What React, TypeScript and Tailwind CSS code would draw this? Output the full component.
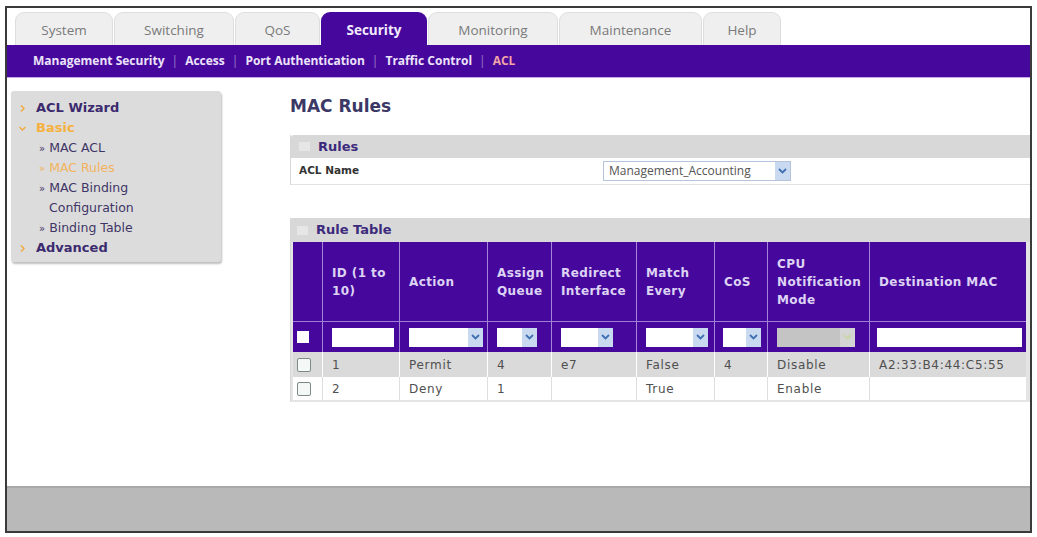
import React from 'react';

const tabs = ['System', 'Switching', 'QoS', 'Security', 'Monitoring', 'Maintenance', 'Help'];
const tabWidths = ['w-[98px]', 'w-[120px]', 'w-[85px]', 'w-[106px]', 'w-[130px]', 'w-[143px]', 'w-[78px]'];

const subLinks = ['Management Security', 'Access', 'Port Authentication', 'Traffic Control'];

// column widths for the rule table
const cols = [
  { w: 'w-[29px]', label: '' },
  { w: 'w-[77px]', label: 'ID (1 to 10)' },
  { w: 'w-[88px]', label: 'Action' },
  { w: 'w-[64px]', label: 'Assign Queue' },
  { w: 'w-[85px]', label: 'Redirect Interface' },
  { w: 'w-[78px]', label: 'Match Every' },
  { w: 'w-[53px]', label: 'CoS' },
  { w: 'w-[102px]', label: 'CPU Notification Mode' },
  { w: 'w-[157px]', label: 'Destination MAC' },
];

const rows = [
  ['1', 'Permit', '4', 'e7', 'False', '4', 'Disable', 'A2:33:B4:44:C5:55'],
  ['2', 'Deny', '1', '', 'True', '', 'Enable', ''],
];

const navFont = { fontFamily: '"Open Sans", "Liberation Sans", sans-serif' };

const Chevron: React.FC<{ dim?: boolean }> = ({ dim }) => (
  <svg width="9" height="6" viewBox="0 0 9 6">
    <path d="M1 1 L4.5 4.5 L8 1" fill="none" stroke={dim ? '#c9d6a8' : '#3f6fb5'} strokeWidth="1.8" />
  </svg>
);

const Select: React.FC<{ w: string; disabled?: boolean }> = ({ w, disabled }) => (
  <div className={`${w} h-[19px] flex justify-end ${disabled ? 'bg-[#c4c4c4]' : 'bg-white'}`}>
    <div className={`w-[15px] h-full flex items-center justify-center ${disabled ? 'bg-[#d4d4d4]' : 'bg-[#c9d9ef]'}`}>
      <Chevron dim={disabled} />
    </div>
  </div>
);

// orange tree arrow of the side menu
const Arrow: React.FC<{ open?: boolean }> = ({ open }) => (
  <span className="w-[17px] flex items-center">
    <svg width="7" height="7" viewBox="0 0 7 7">
      <path
        d={open ? 'M0.5 2 L3.5 5 L6.5 2' : 'M2 0.5 L5 3.5 L2 6.5'}
        fill="none"
        stroke="#f3a93c"
        strokeWidth="1.4"
      />
    </svg>
  </span>
);

const App: React.FC = () => {
  return (
    <div className="w-[1037px] h-[537px] bg-white pt-[6px] px-[5px]" style={{ fontFamily: '"DejaVu Sans", Verdana, sans-serif' }}>
      <div className="h-[527px] border-2 border-[#3a3a3a] flex flex-col">

        {/* Top tabs */}
        <div className="h-[37px] flex items-end pl-[8px] bg-white" style={navFont}>
          {tabs.map((t, i) => (
            <div
              key={t}
              className={`${tabWidths[i]} h-[33px] mr-[1px] rounded-t-[9px] flex items-center justify-center pt-[3px] text-[13.5px] ${
                t === 'Security'
                  ? 'bg-[#46089c] text-[#f2eaff] font-bold'
                  : 'bg-[#efefef] text-[#7a7a7a] border border-b-0 border-[#dedede]'
              }`}
            >
              {t}
            </div>
          ))}
        </div>

        {/* Sub navigation */}
        <div className="h-[33px] bg-[#46089c] border-b border-[#c9a7ea] flex items-center pl-[26px] text-[12px] font-bold text-[#ece3fa]" style={navFont}>
          {subLinks.map((s) => (
            <React.Fragment key={s}>
              <span>{s}</span>
              <span className="mx-[7px] text-[#9a7cc8] font-normal">|</span>
            </React.Fragment>
          ))}
          <span className="text-[#f2a3a8]">ACL</span>
        </div>

        {/* Body */}
        <div className="flex-1 flex bg-white">
          {/* Sidebar */}
          <div className="w-[285px] pl-[4px] pt-[13px]">
            <div className="w-[210px] h-[171px] bg-[#dcdcdc] rounded-[3px] shadow-[1px_2px_2px_rgba(0,0,0,0.25)] pt-[7px] pl-[8px] text-[#3b2a6e]">
              <div className="h-[20px] flex items-center text-[13px] font-bold"><Arrow />ACL Wizard</div>
              <div className="h-[20px] flex items-center text-[13px] font-bold text-[#f6b13c]"><Arrow open />Basic</div>
              <div className="h-[20px] flex items-center pl-[20px] text-[12.5px] text-[#3e3566]"><span className="mr-[4px] text-[10px]">»</span>MAC ACL</div>
              <div className="h-[20px] flex items-center pl-[20px] text-[12.5px] text-[#f3b35c]"><span className="mr-[4px] text-[10px]">»</span>MAC Rules</div>
              <div className="h-[20px] flex items-center pl-[20px] text-[12.5px] text-[#3e3566]"><span className="mr-[4px] text-[10px]">»</span>MAC Binding</div>
              <div className="h-[20px] flex items-center pl-[30px] text-[12.5px] text-[#3e3566]">Configuration</div>
              <div className="h-[20px] flex items-center pl-[20px] text-[12.5px] text-[#3e3566]"><span className="mr-[4px] text-[10px]">»</span>Binding Table</div>
              <div className="h-[20px] flex items-center text-[13px] font-bold"><Arrow />Advanced</div>
            </div>
          </div>

          {/* Main content */}
          <div className="flex-1 pt-[16px]">
            <div className="h-[41px] text-[17px] font-bold text-[#3b3866]">MAC Rules</div>

            {/* Rules box */}
            <div className="border-l border-[#d6d6d6]">
              <div className="h-[23px] bg-[#d8d8d8] flex items-center pl-[8px] rounded-tl-[3px]">
                <span className="w-[11px] h-[9px] bg-[#e6e6e6] mr-[8px]" />
                <span className="text-[13px] font-bold text-[#3c2a7c]">Rules</span>
              </div>
              <div className="h-[27px] flex items-center pl-[8px] border-b border-[#e2e2e2]">
                <span className="w-[304px] text-[10.5px] font-bold text-[#333]">ACL Name</span>
                <div className="w-[188px] h-[20px] border border-[#b5c3dc] bg-white flex items-center justify-between pl-[5px]">
                  <span className="text-[12px] text-[#555]" style={navFont}>Management_Accounting</span>
                  <div className="w-[15px] h-full bg-[#c9d9ef] flex items-center justify-center"><Chevron /></div>
                </div>
              </div>
            </div>

            {/* Rule table box */}
            <div className="mt-[33px] border-l border-[#d6d6d6] border-b border-b-[#e6e6e6] bg-[#e4e4e4] pb-[1px] pl-[2px] pr-[4px]">
              <div className="h-[24px] bg-[#d8d8d8] flex items-center pl-[6px] -ml-[2px] -mr-[4px] rounded-tl-[3px]">
                <span className="w-[11px] h-[9px] bg-[#e6e6e6] mr-[8px]" />
                <span className="text-[13px] font-bold text-[#3c2a7c]">Rule Table</span>
              </div>

              {/* header row */}
              <div className="flex bg-[#46089c] h-[80px] border-b border-[#9f7ed6]">
                {cols.map((c, i) => (
                  <div
                    key={i}
                    className={`${c.w} ${i > 0 ? 'border-l border-[#a585d8]' : ''} flex items-center pl-[9px] pr-[3px] text-[12px] tracking-[0.4px] font-bold leading-[18px] text-[#ddd3f4]`}
                  >
                    {c.label}
                  </div>
                ))}
              </div>

              {/* filter row */}
              <div className="flex bg-[#46089c] h-[30px]">
                <div className="w-[29px] flex items-center pl-[4px]"><div className="w-[12px] h-[12px] bg-white" /></div>
                <div className="w-[77px] border-l border-[#a585d8] flex items-center pl-[9px]"><div className="w-[62px] h-[19px] bg-white" /></div>
                <div className="w-[88px] border-l border-[#a585d8] flex items-center pl-[9px]"><Select w="w-[74px]" /></div>
                <div className="w-[64px] border-l border-[#a585d8] flex items-center pl-[9px]"><Select w="w-[40px]" /></div>
                <div className="w-[85px] border-l border-[#a585d8] flex items-center pl-[9px]"><Select w="w-[52px]" /></div>
                <div className="w-[78px] border-l border-[#a585d8] flex items-center pl-[9px]"><Select w="w-[62px]" /></div>
                <div className="w-[53px] border-l border-[#a585d8] flex items-center pl-[8px]"><Select w="w-[38px]" /></div>
                <div className="w-[102px] border-l border-[#a585d8] flex items-center pl-[9px]"><Select w="w-[78px]" disabled /></div>
                <div className="w-[157px] border-l border-[#a585d8] flex items-center pl-[7px]"><div className="w-[145px] h-[19px] bg-white" /></div>
              </div>

              {/* data rows */}
              {rows.map((r, ri) => (
                <div key={ri} className={`flex ${ri === 0 ? 'h-[25px] bg-[#dadada]' : 'h-[23px] bg-white'}`}>
                  <div className="w-[29px] flex items-center pl-[4px]">
                    <div className="w-[14px] h-[14px] border border-[#7d8a8a] rounded-[2px] bg-[#f4f8f6]" />
                  </div>
                  {r.map((v, ci) => (
                    <div
                      key={ci}
                      className={`${cols[ci + 1].w} border-l ${ri === 0 ? 'border-white' : 'border-[#dedede]'} flex items-center pl-[9px] text-[12px] tracking-[0.7px] text-[#505050]`}
                    >
                      {v}
                    </div>
                  ))}
                </div>
              ))}
            </div>
          </div>
        </div>

        {/* Footer bar */}
        <div className="h-[45px] bg-[#b9b9b9] border-t-2 border-[#a9a9a9]" />
      </div>
    </div>
  );
};

export default App;
